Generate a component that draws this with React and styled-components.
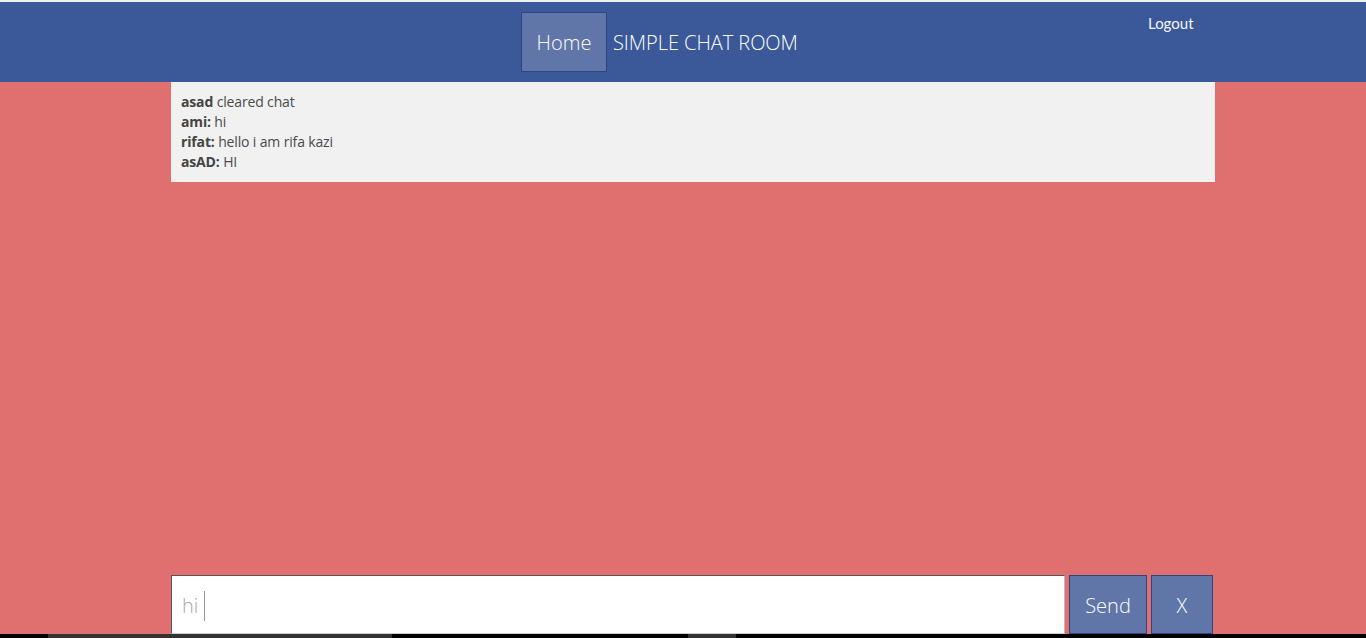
import React from "react";
import styled, { createGlobalStyle } from "styled-components";

const Global = createGlobalStyle`
  html, body { margin: 0; padding: 0; height: 100%; }
  body { font-family: "Open Sans", "Liberation Sans", sans-serif; background: #e07070; overflow: hidden; }
  #root { height: 100%; }
`;

const Page = styled.div`
  height: 638px;
  display: flex;
  flex-direction: column;
  border-top: 2px solid #f0f0f0;
  box-sizing: border-box;
`;

const Header = styled.header`
  height: 80px;
  flex: none;
  background: #3b5998;
  display: flex;
  align-items: flex-start;
  position: relative;
`;

const Nav = styled.nav`
  display: flex;
  align-items: center;
  margin-left: 521px;
  margin-top: 10px;
  gap: 6px;
`;

const NavButton = styled.a`
  box-sizing: border-box;
  width: 86px;
  height: 60px;
  display: flex;
  align-items: center;
  justify-content: center;
  background: #6076a8;
  border: 1px solid #2d4680;
  color: #fff;
  font-size: 20px;
  font-weight: 300;
  text-decoration: none;
`;

const Title = styled.span`
  color: #fff;
  font-size: 20px;
  font-weight: 300;
  letter-spacing: -0.05px;
`;

const Logout = styled.a`
  position: absolute;
  left: 1148px;
  top: 12px;
  color: #f4f6fb;
  font-family: Lato, "Open Sans", sans-serif;
  font-size: 15px;
  font-weight: 400;
  text-decoration: none;
`;

const Main = styled.main`
  flex: 1;
  display: flex;
  flex-direction: column;
  padding-left: 171px;
`;

const ChatBox = styled.div`
  width: 1044px;
  height: 100px;
  box-sizing: border-box;
  background: #f1f1f1;
  padding: 10px 10px;
  color: #4a4a4a;
  font-size: 14px;
  line-height: 20px;
  letter-spacing: -0.15px;
`;

const Line = styled.div`
  white-space: nowrap;
  b { font-weight: 700; color: #444; }
`;

const Form = styled.form`
  margin-top: auto;
  display: flex;
  gap: 4px;
  height: 59px;
`;

const InputBox = styled.div`
  box-sizing: border-box;
  width: 894px;
  height: 59px;
  background: #fff;
  border: 1px solid #555;
  border-right-color: #bbb;
  border-bottom-color: #ccc;
  display: flex;
  align-items: center;
  padding-left: 10px;
  padding-top: 2px;
  font-size: 20px;
  font-weight: 300;
  color: #a8a8a8;
`;

const Caret = styled.span`
  display: inline-block;
  width: 1px;
  height: 30px;
  background: #999;
  margin-left: 6px;
`;

const Button = styled.button`
  box-sizing: border-box;
  width: ${(p) => p.$w}px;
  height: 59px;
  background: #6076a8;
  border: 1px solid #2d4680;
  color: #fff;
  font-family: "Open Sans", sans-serif;
  font-size: 20px;
  font-weight: 300;
  padding: 2px 0 0;
`;

const Scrollbar = styled.div`
  height: 4px;
  flex: none;
  background: #000;
  display: flex;
`;

const Thumb = styled.div`
  margin-left: ${(p) => p.$ml}px;
  width: ${(p) => p.$w}px;
  background: #333;
`;

export default function App() {
  return (
    <>
      <Global />
      <Page>
        <Header>
          <Nav>
            <NavButton href="#">Home</NavButton>
            <Title>SIMPLE CHAT ROOM</Title>
          </Nav>
          <Logout href="#">Logout</Logout>
        </Header>
        <Main>
          <ChatBox>
            <Line><b>asad</b> cleared chat</Line>
            <Line><b>ami:</b> hi</Line>
            <Line><b>rifat:</b> hello i am rifa kazi</Line>
            <Line><b>asAD:</b> HI</Line>
          </ChatBox>
          <Form onSubmit={(e) => e.preventDefault()}>
            <InputBox>hi<Caret /></InputBox>
            <Button type="submit" $w={78}>Send</Button>
            <Button type="button" $w={62}>X</Button>
          </Form>
        </Main>
        <Scrollbar>
          <Thumb $ml={48} $w={344} />
          <Thumb $ml={296} $w={48} />
        </Scrollbar>
      </Page>
    </>
  );
}
